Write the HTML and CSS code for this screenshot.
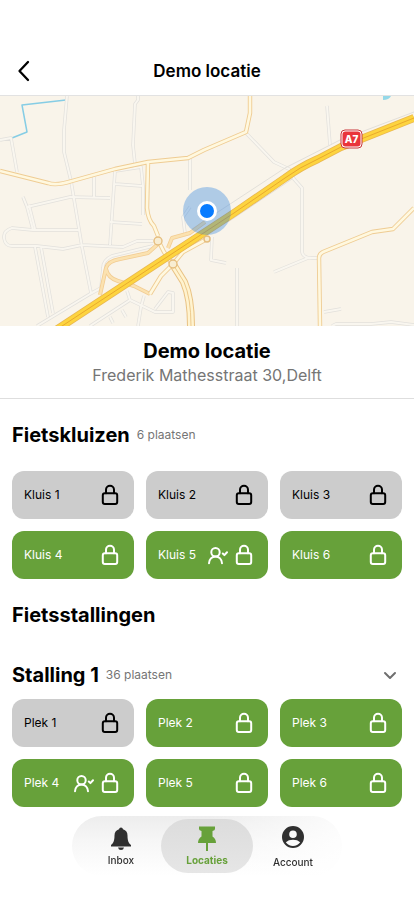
FILE: index.html
```html
<!DOCTYPE html>
<html lang="nl">
<head>
<meta charset="utf-8">
<meta name="viewport" content="width=device-width, initial-scale=1">
<title>Demo locatie</title>
<link rel="stylesheet" href="styles.css">
</head>
<body>
<svg class="sprite" aria-hidden="true">
  <symbol id="lock" viewBox="0 0 24 24">
    <rect x="4.800" y="10.200" width="14.400" height="10.800" rx="2"/>
    <path d="M8 10.200V6.700a4 4 0 0 1 8 0v3.500"/>
  </symbol>
  <symbol id="user-check" viewBox="0 0 24 24">
    <circle cx="11.500" cy="9.200" r="4.200"/>
    <path d="M5 20.300c0-4 3-6.900 6.500-6.900s6.500 2.900 6.500 6.900M18.800 10.500l1.600 1.600L23 9.300"/>
  </symbol>
</svg>

<header class="topbar">
  <button class="back" type="button" aria-label="Terug">
    <svg viewBox="0 0 24 24" aria-hidden="true"><path d="M16 3L7.500 12L16 21"/></svg>
  </button>
  <h1 class="topbar-title">Demo locatie</h1>
</header>

<main>
  <svg class="map" viewBox="0 96 414 230" preserveAspectRatio="xMidYMid slice" role="img" aria-label="Kaart">
    <defs>
      <path id="minor" d="M67 96L64 130V152L71 181L75 205L82 247L91 293 M138 96V100L135 104L133 145L135 164 M0 140L11 138L17 172 M23 197L27 207L33 230 M27 207L70 197L110 198 M29 205L35 229 M35 247L48 317 M41 247L53 313 M94 177V197 M115 171L110 245 M115 184L142 186 M115 171L141 167L143 186V215 M110 222L142 224 M80 230H33L12 228Q3 231 4 238Q5 246 12 246H37L63 249L82 245L123 247L137 241H153 M190 159V190 M37 326L90 294L101 288L103 268Q103 260 112 256L153 246 M90 326L127 302L130 300L127 291 M130 300L155 312H173V293L168 292L155 309 M110 317L113 323 M122 310L126 317 M144 296L141 307L138 326 M185 233L183 217L190 207 M246 133L274 162L289 169L294 179L302 188V252Q303 258 312 258H318 M308 258L274 272 M327 106L330 145 M237 268V326 M212 237L211 260L226 263 M324 312L341 309 M332 326L336 324H371L391 322L414 325"/>
      <path id="secondary" d="M0 171L48 183Q56 186 72 181L115 169L148 162L188 158L204 150L246 132L250 113V96 M148 162L147 208Q148 220 154 226L158 236 M160 244L164 252L172 264 M171 266L161 276L150 294 M205 240L183 252L173 264 M320 326L319 258Q319 254 323 252L372 232L393 229L414 208"/>
      <path id="ramp" d="M100 295L106 268Q108 261 120 259L148 253L158 244 M106 269Q108 278 118 281L134 286L150 294 M168 248L172 238L190 233L205 222"/>
      <path id="highway" d="M56 330L234 213L285 178Q300 167 318 159L341 147L414 118"/>
    </defs>
    <rect class="land" y="96" width="414" height="230"/>
    <path class="water-line" d="M66 100L22 105L27 132L12 138"/>
    <path class="water" d="M383 96H391Q389 100 383 100Z"/>
    <use href="#minor" class="minor-edge"/><use href="#minor" class="minor-fill"/>
    <path class="service" d="M192 229L285 168L340 140L414 112 M228 222L292 179"/>
    <use href="#ramp" class="ramp-edge"/><use href="#ramp" class="ramp-fill"/>
    <use href="#secondary" class="secondary-edge"/><use href="#secondary" class="secondary-fill"/>
    <path class="dual-edge" d="M174 266L184 282Q191 298 191 326"/>
    <path class="dual-fill" d="M174 266L184 282Q191 298 191 326"/>
    <path class="dual-line" d="M174 266L184 282Q191 298 191 326"/>
    <use href="#highway" class="highway-edge"/><use href="#highway" class="highway-fill"/><use href="#highway" class="highway-line"/>
    <circle class="roundabout" cx="158" cy="241" r="4"/>
    <circle class="roundabout" cx="173" cy="264" r="4"/>
    <circle class="roundabout" cx="207" cy="239" r="3"/>
    <rect class="shield-edge" x="341" y="130" width="21" height="18" rx="4"/>
    <rect class="shield" x="342.500" y="131.500" width="18" height="15" rx="3"/>
    <text class="shield-text" x="351.500" y="143" text-anchor="middle">A7</text>
    <circle class="halo" cx="207" cy="211" r="24"/>
    <circle class="pin" cx="207" cy="211" r="8.500"/>
  </svg>

  <section class="info">
    <h2>Demo locatie</h2>
    <p>Frederik Mathesstraat 30,Delft</p>
  </section>

  <section class="content">
    <div class="heading"><h2>Fietskluizen</h2><span>6 plaatsen</span></div>
    <div class="grid">
      <button class="spot" type="button">Kluis 1<svg class="icon first"><use href="#lock"/></svg></button>
      <button class="spot" type="button">Kluis 2<svg class="icon first"><use href="#lock"/></svg></button>
      <button class="spot" type="button">Kluis 3<svg class="icon first"><use href="#lock"/></svg></button>
      <button class="spot free" type="button">Kluis 4<svg class="icon first"><use href="#lock"/></svg></button>
      <button class="spot free" type="button">Kluis 5<svg class="icon first"><use href="#user-check"/></svg><svg class="icon"><use href="#lock"/></svg></button>
      <button class="spot free" type="button">Kluis 6<svg class="icon first"><use href="#lock"/></svg></button>
    </div>

    <div class="heading"><h2>Fietsstallingen</h2></div>
    <div class="heading compact">
      <h2>Stalling 1</h2><span>36 plaatsen</span>
      <button class="toggle" type="button" aria-label="Stalling 1 inklappen">
        <svg viewBox="0 0 24 24" aria-hidden="true"><path d="M7 10l5 5l5-5"/></svg>
      </button>
    </div>
    <div class="grid">
      <button class="spot" type="button">Plek 1<svg class="icon first"><use href="#lock"/></svg></button>
      <button class="spot free" type="button">Plek 2<svg class="icon first"><use href="#lock"/></svg></button>
      <button class="spot free" type="button">Plek 3<svg class="icon first"><use href="#lock"/></svg></button>
      <button class="spot free" type="button">Plek 4<svg class="icon first"><use href="#user-check"/></svg><svg class="icon"><use href="#lock"/></svg></button>
      <button class="spot free" type="button">Plek 5<svg class="icon first"><use href="#lock"/></svg></button>
      <button class="spot free" type="button">Plek 6<svg class="icon first"><use href="#lock"/></svg></button>
    </div>
  </section>
</main>

<nav class="tabbar">
  <a class="tab" href="#inbox">
    <svg viewBox="0 0 24 26" aria-hidden="true"><path d="M12 1.500q1.700 0 2 1.800c3 .8 4.500 3.200 4.500 6.200 0 5 1 7.500 3.500 9.500v1.500H2V19c2.500-2 3.500-4.500 3.500-9.500 0-3 1.500-5.400 4.500-6.200q.3-1.800 2-1.800zM9 21.500h6q-.5 2.500-3 2.500t-3-2.500z"/></svg>
    Inbox
  </a>
  <a class="tab active" href="#locaties" aria-current="page">
    <svg viewBox="0 0 24 26" aria-hidden="true"><path d="M4 .5h16V3q0 1.500-2.500 2v5.500q3.500 2 3.500 6.500h-8V25h-2v-8H3q0-4.500 3.500-6.500V5Q4 4.500 4 3z"/></svg>
    Locaties
  </a>
  <a class="tab tall" href="#account">
    <svg viewBox="0 0 24 24" aria-hidden="true"><path fill-rule="evenodd" d="M12 1a11 11 0 1 1 0 22a11 11 0 0 1 0-22zM12 5.500a3.800 3.800 0 1 0 0 7.600a3.800 3.800 0 0 0 0-7.600zM4.800 17.200a8.700 8.700 0 0 0 14.400 0q-2.700-2.400-7.200-2.400t-7.200 2.400z"/></svg>
    Account
  </a>
</nav>
</body>
</html>
```

FILE: styles.css
```css
* { box-sizing: border-box; }

body {
  margin: 0;
  background: #fff;
  color: #000;
  font-family: Inter, "Liberation Sans", sans-serif;
}

h1, h2, p { margin: 0; }
button { font: inherit; color: inherit; border: 0; background: none; padding: 0; cursor: pointer; }
svg { display: block; }
.sprite { display: none; }

.topbar {
  display: grid;
  grid-template-columns: 24px 1fr 24px;
  align-items: center;
  padding: 47px 12px 0;
  height: 96px;
  border-bottom: 1px solid #e2e2e2;
}
.back svg { width: 24px; height: 24px; fill: none; stroke: #000; stroke-width: 2.3; stroke-linecap: round; stroke-linejoin: round; }
.topbar-title { font-size: 17px; line-height: 24px; font-weight: 600; text-align: center; }

.map { width: 100%; height: 230px; fill: none; stroke-linejoin: round; }
.land { fill: #f9f4ea; }
.water-line { stroke: #86cde5; stroke-width: 1.5; }
.water { fill: #94d8e8; }
.minor-edge { stroke: #e2e0dc; stroke-width: 3.4; }
.minor-fill { stroke: #f9f6ef; stroke-width: 2; }
.service { stroke: #e2dfd9; stroke-width: 1; }
.ramp-edge { stroke: #f2cc92; stroke-width: 4; }
.ramp-fill { stroke: #fbe2b0; stroke-width: 2.4; }
.secondary-edge { stroke: #efcc93; stroke-width: 4.4; }
.secondary-fill { stroke: #fff8df; stroke-width: 2.6; }
.dual-edge { stroke: #e9c283; stroke-width: 8; }
.dual-fill { stroke: #fff3cf; stroke-width: 6; }
.dual-line { stroke: #edc98c; stroke-width: 1; }
.highway-edge { stroke: #e9b751; stroke-width: 8; }
.highway-fill { stroke: #fdd43f; stroke-width: 6.4; }
.highway-line { stroke: #e9a92e; stroke-width: 1; }
.roundabout { fill: #f8edd2; stroke: #e5bd7d; stroke-width: 1.4; }
.shield-edge { fill: #fff; stroke: #c9363b; stroke-width: 1; }
.shield { fill: #e9343a; }
.shield-text { fill: #fff; font-size: 10px; font-weight: 800; }
.halo { fill: #247ddf; fill-opacity: .35; }
.pin { fill: #087cff; stroke: #fff; stroke-width: 3; }

.info {
  padding: 13px 12px 11px;
  border-bottom: 1px solid #dedede;
  text-align: center;
}
.info h2 { font-size: 20px; line-height: 24px; font-weight: 700; }
.info p { font-size: 16px; line-height: 24px; color: #757575; }

.content { padding: 0 12px 88px; }
.heading { display: flex; align-items: center; gap: 7px; height: 72px; }
.heading.compact { height: 48px; }
.heading h2 { font-size: 20px; line-height: 24px; font-weight: 700; }
.heading span { font-size: 12px; line-height: 16px; color: #757575; }
.toggle { margin-left: auto; }
.toggle svg { width: 24px; height: 24px; fill: none; stroke: #6f6f6f; stroke-width: 2; stroke-linecap: round; stroke-linejoin: round; }

.grid { display: grid; grid-template-columns: repeat(3, 1fr); gap: 12px; }
.spot {
  display: flex;
  align-items: center;
  height: 48px;
  padding: 0 12px;
  border-radius: 12px;
  background: #ccc;
  font-size: 12px;
  line-height: 16px;
}
.spot.free { background: #67a13a; color: #fff; }
.icon { flex: none; width: 24px; height: 24px; fill: none; stroke: currentColor; stroke-width: 2; stroke-linecap: round; stroke-linejoin: round; }
.icon.first { margin-left: auto; }
.icon + .icon { margin-left: 4px; }

.tabbar {
  position: fixed;
  left: 50%;
  bottom: 27px;
  transform: translateX(-50%);
  display: grid;
  grid-template-columns: repeat(3, 86px);
  padding: 3px 6px;
  border-radius: 30px;
  background: linear-gradient(to right, transparent 50%, rgba(255, 255, 255, .8)), linear-gradient(#ededed, #f6f6f6 40%, #fff);
}
.tab {
  display: flex;
  flex-direction: column;
  align-items: center;
  gap: 1px;
  height: 54px;
  padding-top: 7px;
  color: #303030;
  font-size: 10px;
  line-height: 14px;
  font-weight: 500;
  text-decoration: none;
}
.tab svg { width: 24px; height: 26px; fill: currentColor; }
.tab.tall { gap: 6px; padding-top: 6px; }
.tab.tall svg { height: 24px; }
.tab.active {
  margin: 0 -3px;
  border-radius: 27px;
  background: linear-gradient(#dcdcdc, #e6e6e6);
  color: #67a13a;
  font-weight: 700;
}
```
